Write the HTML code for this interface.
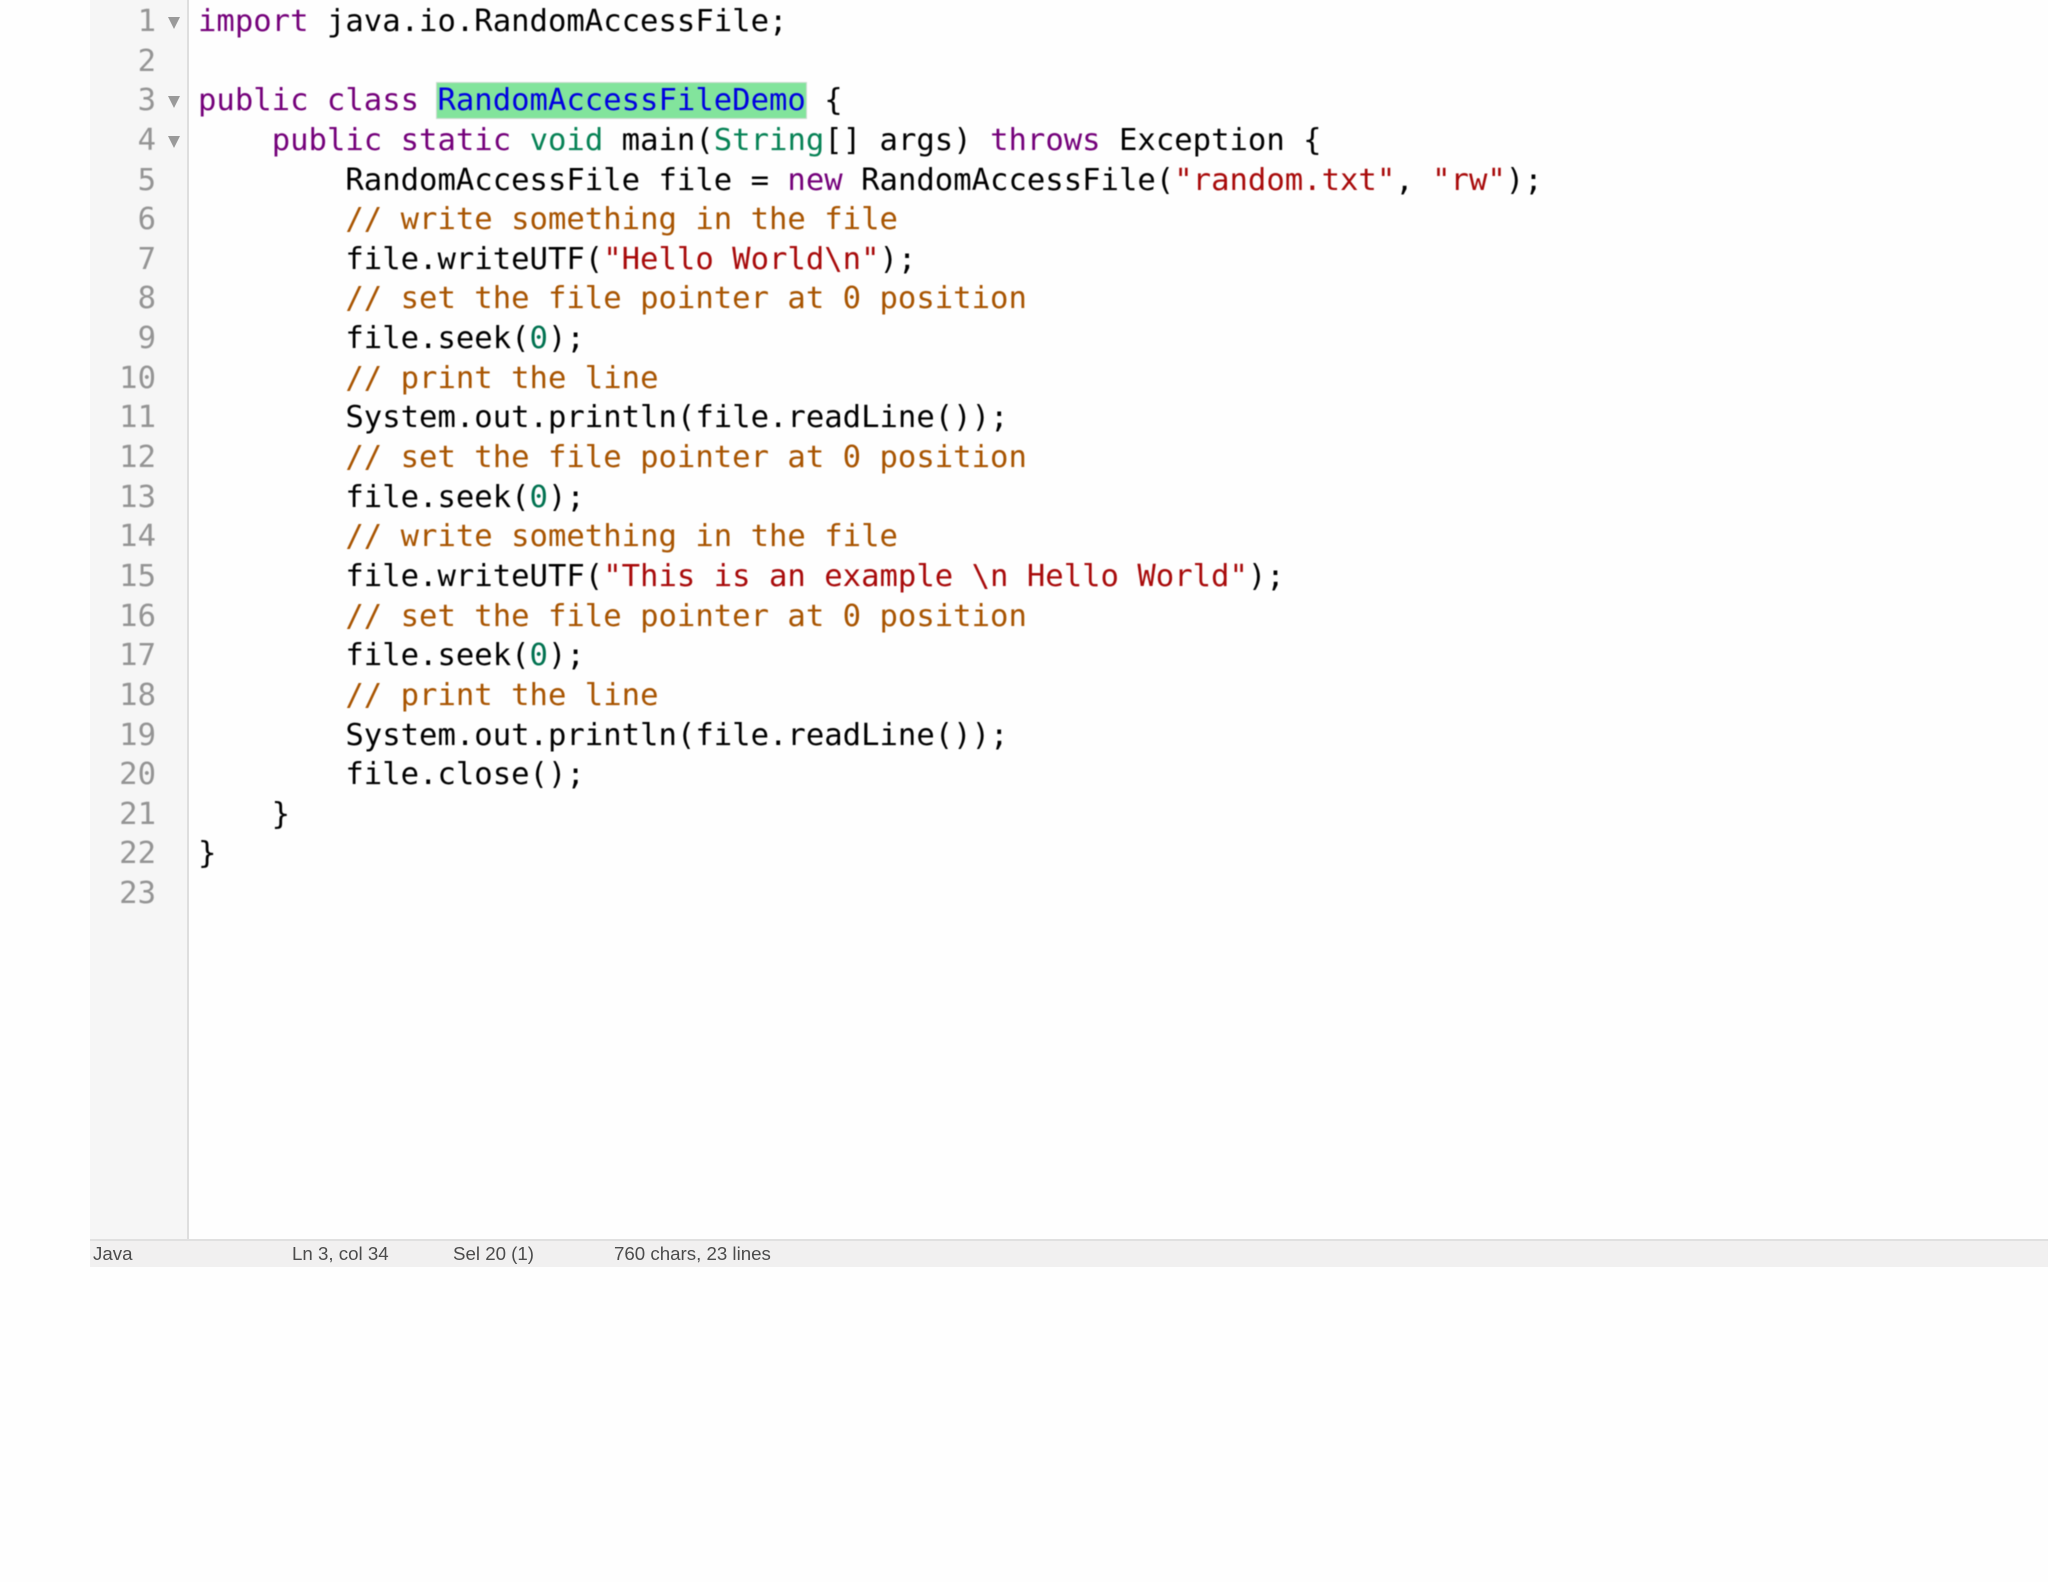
<!DOCTYPE html>
<html><head><meta charset="utf-8"><style>
html,body{margin:0;padding:0;background:#fefefe;width:2048px;height:1582px;overflow:hidden}
#g{position:absolute;left:90px;top:0;width:96.5px;height:1239px;background:#f6f6f6;border-right:2px solid #dedede}
#n{position:absolute;left:90px;top:2px;width:66px;text-align:right}
#n div,#c div{height:39.65px;line-height:39.65px;white-space:pre}
#n,#c{font:30.6px "DejaVu Sans Mono","Liberation Mono",monospace;filter:blur(.45px)}
#n{color:#949494}
#c{position:absolute;left:198px;top:2px;color:#000}
.k{color:#74007a}.t{color:#068255}.s{color:#a80a0a}.m{color:#a85400}.d{color:#007250}
.h{background:#82e49c;color:#0000e0;box-shadow:0 0 0 1px #c9dcd0}
.a{position:absolute;left:168px;width:0;height:0;border-left:6px solid transparent;border-right:6px solid transparent;border-top:12px solid #9a9a9a}
#b{position:absolute;left:90px;top:1239px;width:1958px;height:28px;background:#f1f0f0;border-top:2px solid #e0e0e0;box-sizing:border-box;font:18.7px "Liberation Sans",sans-serif;color:#4c4c4c}
#b span{position:absolute;top:2px;line-height:22px;white-space:pre;filter:blur(.35px)}
</style></head><body>
<div id="g"></div>
<div id="n"><div>1</div><div>2</div><div>3</div><div>4</div><div>5</div><div>6</div><div>7</div><div>8</div><div>9</div><div>10</div><div>11</div><div>12</div><div>13</div><div>14</div><div>15</div><div>16</div><div>17</div><div>18</div><div>19</div><div>20</div><div>21</div><div>22</div><div>23</div></div>
<div class="a" style="top:17px"></div><div class="a" style="top:96px"></div><div class="a" style="top:136px"></div>
<div id="c"><div><span class="k">import</span> java.io.RandomAccessFile;</div><div> </div><div><span class="k">public class</span> <span class="h">RandomAccessFileDemo</span> {</div><div>    <span class="k">public static</span> <span class="t">void</span> main(<span class="t">String</span>[] args) <span class="k">throws</span> Exception {</div><div>        RandomAccessFile file = <span class="k">new</span> RandomAccessFile(<span class="s">"random.txt"</span>, <span class="s">"rw"</span>);</div><div>        <span class="m">// write something in the file</span></div><div>        file.writeUTF(<span class="s">"Hello World\n"</span>);</div><div>        <span class="m">// set the file pointer at 0 position</span></div><div>        file.seek(<span class="d">0</span>);</div><div>        <span class="m">// print the line</span></div><div>        System.out.println(file.readLine());</div><div>        <span class="m">// set the file pointer at 0 position</span></div><div>        file.seek(<span class="d">0</span>);</div><div>        <span class="m">// write something in the file</span></div><div>        file.writeUTF(<span class="s">"This is an example \n Hello World"</span>);</div><div>        <span class="m">// set the file pointer at 0 position</span></div><div>        file.seek(<span class="d">0</span>);</div><div>        <span class="m">// print the line</span></div><div>        System.out.println(file.readLine());</div><div>        file.close();</div><div>    }</div><div>}</div><div> </div></div>
<div id="b"><span style="left:3px">Java</span><span style="left:202px">Ln 3, col 34</span><span style="left:363px">Sel 20 (1)</span><span style="left:524px">760 chars, 23 lines</span></div>
</body></html>
